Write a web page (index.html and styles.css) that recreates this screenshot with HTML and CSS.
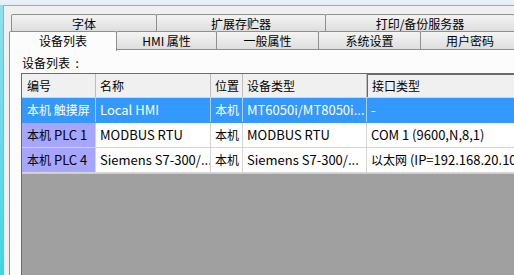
FILE: index.html
```html
<!DOCTYPE html>
<html lang="zh-CN">
<head>
    <meta charset="UTF-8">
    <meta name="viewport" content="width=device-width, initial-scale=1.0">
    <title>设备列表</title>
    <link rel="stylesheet" href="styles.css">
</head>
<body>
    <div class="window">
        <div class="tabs">
            <div class="tab-row back">
                <div class="tab w146">字体</div>
                <div class="tab w170">扩展存贮器</div>
                <div class="tab w190">打印/备份服务器</div>
            </div>
            <div class="tab-row front">
                <div class="tab active w108">设备列表</div>
                <div class="tab w101">HMI 属性</div>
                <div class="tab w103">一般属性</div>
                <div class="tab w103">系统设置</div>
                <div class="tab w100">用户密码</div>
            </div>
        </div>

        <div class="panel">
            <div class="caption">设备列表&nbsp; :</div>

            <div class="list">
                <div class="row head">
                    <div class="cell c1">编号</div>
                    <div class="cell c2">名称</div>
                    <div class="cell c3">位置</div>
                    <div class="cell c4">设备类型</div>
                    <div class="cell c5 sorted">接口类型</div>
                </div>
                <div class="row selected">
                    <div class="cell c1"><span class="zh">本机 触摸屏</span></div>
                    <div class="cell c2">Local HMI</div>
                    <div class="cell c3">本机</div>
                    <div class="cell c4">MT6050i/MT8050i...</div>
                    <div class="cell c5">-</div>
                </div>
                <div class="row">
                    <div class="cell c1 plc"><span class="zh">本机</span> PLC 1</div>
                    <div class="cell c2">MODBUS RTU</div>
                    <div class="cell c3">本机</div>
                    <div class="cell c4">MODBUS RTU</div>
                    <div class="cell c5">COM 1 (9600,N,8,1)</div>
                </div>
                <div class="row">
                    <div class="cell c1 plc"><span class="zh">本机</span> PLC 4</div>
                    <div class="cell c2">Siemens S7-300/...</div>
                    <div class="cell c3">本机</div>
                    <div class="cell c4">Siemens S7-300/...</div>
                    <div class="cell c5"><span class="zh">以太网</span> (IP=192.168.20.10</div>
                </div>
                <div class="empty"></div>
            </div>
        </div>
    </div>
</body>
</html>
```

FILE: styles.css
```css
html, body {
    margin: 0;
    padding: 0;
    height: 100%;
    overflow: hidden;
}

body {
    width: 514px;
    height: 275px;
    font-family: "Noto Sans CJK SC", "Noto Sans", sans-serif;
    color: #000;
    background: linear-gradient(to bottom, #eaf2f6 0, #dfeef4 5px, #8fe0ec 5px, #3fd6e6 100%);
    display: flex;
    flex-direction: column;
}

.window {
    margin: 5px 0 0 3px;
    flex: 1;
    display: flex;
    flex-direction: column;
    border-top: 1px solid #a9a9a9;
    border-left: 1px solid #a9a9a9;
    background: #f0f0f0;
    padding: 8px 0 0 5px;
    min-height: 0;
}

/* tab strip */
.tabs {
    display: flex;
    flex-direction: column;
    white-space: nowrap;
}

.tab-row {
    display: flex;
}

.tab-row.back {
    margin-left: 2px;
    height: 17px;
}

.tab-row.front {
    height: 18px;
    position: relative;
    z-index: 1;
}

.tab {
    flex: none;
    box-sizing: border-box;
    text-align: center;
    font-size: 12px;
    line-height: 18px;
    border: 1px solid #8e8f8f;
    border-bottom: none;
    border-radius: 2px 2px 0 0;
    background: linear-gradient(to bottom, #f4f4f4, #dedede);
}

.tab-row.back .tab {
    margin-right: -1px;
}

.tab-row.front .tab {
    margin-right: -1px;
    line-height: 17px;
}

.tab.active {
    background: #fcfcfc;
    height: 20px;
    line-height: 18px;
}

.w100 { width: 100px; }
.w101 { width: 101px; }
.w103 { width: 103px; }
.w108 { width: 108px; }
.w146 { width: 146px; }
.w170 { width: 170px; }
.w190 { width: 190px; }

/* page content */
.panel {
    flex: 1;
    display: flex;
    flex-direction: column;
    background: #fcfcfc;
    border-left: 1px solid #8e8f8f;
    border-top: 1px solid #8e8f8f;
    min-height: 0;
}

.caption {
    font-size: 12px;
    line-height: 14px;
    padding: 6px 0 0 12px;
    height: 17px;
}

.list {
    flex: 1;
    display: flex;
    flex-direction: column;
    margin-left: 11px;
    border-left: 1px solid #6a6a6a;
    border-top: 1px solid #6a6a6a;
    background: #a0a0a0;
    white-space: nowrap;
    min-height: 0;
}

.row {
    display: flex;
    height: 25px;
    background: #fff;
    border-bottom: 1px solid #d5d5d5;
    box-sizing: border-box;
}

.row.head {
    height: 24px;
    background: #f0f0f0;
    border-bottom: 1px solid #c9d6e3;
}

.cell {
    flex: none;
    box-sizing: border-box;
    padding-left: 4px;
    font-size: 13px;
    line-height: 24px;
    border-right: 1px solid #d5d5d5;
    overflow: hidden;
}

.head .cell {
    font-size: 12px;
    line-height: 23px;
    border-right-color: #bdbdbd;
}

.head .cell.sorted {
    border-top: 1px solid #6a6a6a;
    border-left: 1px solid #6a6a6a;
    line-height: 22px;
}

.c1 { width: 74px; padding-left: 5px; }
.c2 { width: 115px; }
.c3 { width: 32px; font-size: 12px; }
.c4 { width: 124px; }
.c5 { width: 170px; border-right: none; }

.zh {
    font-size: 12px;
}

.row.selected {
    background: #3399ff;
    color: #fff;
    border-bottom-color: #3399ff;
}

.row.selected .cell {
    border-right-color: #a8d1fb;
}

.cell.plc {
    background: #a6a6ff;
}

.empty {
    flex: 1;
    border-top: 1px solid #cfcfcf;
}
```
